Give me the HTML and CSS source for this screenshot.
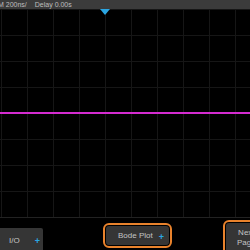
FILE: index.html
```html
<!DOCTYPE html>
<html lang="en">
<head>
    <meta charset="UTF-8">
    <title>Scope</title>
    <link rel="stylesheet" href="styles.css">
</head>
<body>
    <div class="scope">
        <!-- Timebase / delay status line -->
        <div class="status">
            <span class="timebase">M 200ns/</span>
            <span class="delay">Delay 0.00s</span>
        </div>

        <!-- Waveform grid -->
        <div class="grid">
            <svg class="trigger" width="10" height="6" viewBox="0 0 10 6">
                <polygon points="0,0 10,0 5,6" fill="#2ba6e2"/>
            </svg>
            <div class="trace"></div>
        </div>

        <!-- Soft key menu -->
        <div class="menu">
            <div class="key key-io">
                <span class="label">I/O</span>
                <span class="plus">+</span>
            </div>
            <div class="ring ring-bode">
                <div class="key key-bode">
                    <span class="label">Bode Plot</span>
                    <span class="plus">+</span>
                </div>
            </div>
            <div class="ring ring-next">
                <div class="key key-next">
                    <span class="label">Next<br>Page</span>
                </div>
            </div>
        </div>
    </div>
</body>
</html>
```
FILE: styles.css
```css
body {
    margin: 0;
    background-color: #000;
    font-family: "Liberation Sans", Arial, sans-serif;
}
.scope {
    width: 250px;
    height: 250px;
    overflow: hidden;
    display: flex;
    flex-direction: column;
    background-color: #000;
}
.status {
    flex-shrink: 0;
    height: 9px;
    background-color: #3b3b3b;
    color: #bdbdbd;
    font-size: 7px;
    line-height: 9px;
    display: flex;
    gap: 8px;
    white-space: nowrap;
}
.timebase {
    margin-left: -2px;
}
.grid {
    flex-shrink: 0;
    position: relative;
    height: 208px;
    border-bottom: 1px solid #222;
    background-image:
        repeating-linear-gradient(to right, #161616 0, #161616 1px, transparent 1px, transparent 26px),
        repeating-linear-gradient(to bottom, #161616 0, #161616 1px, transparent 1px, transparent 26px);
    background-position: 1px 0, 0 26px;
}
.trigger {
    position: absolute;
    left: 100px;
    top: 0;
    display: block;
}
.trace {
    position: absolute;
    left: 0;
    right: 0;
    top: 103px;
    height: 2px;
    background-color: #d42bd0;
}
.menu {
    flex: 1;
    min-height: 0;
    display: flex;
    align-items: flex-start;
}
.menu > * {
    flex-shrink: 0;
}
.key {
    background-color: #353535;
    color: #c4c4c4;
    font-size: 8px;
    display: flex;
    align-items: center;
    position: relative;
    box-sizing: border-box;
}
.plus {
    color: #2ba6e2;
    font-weight: bold;
    font-size: 9px;
    position: absolute;
}
.key-io {
    margin-top: 10px;
    width: 43px;
    height: 24px;
    border-radius: 0 2px 0 0;
}
.key-io .label {
    margin-left: 9px;
}
.key-io .plus {
    right: 3px;
    top: 8px;
}
.ring {
    border: 2px solid #e8822c;
    border-radius: 6px;
    padding: 1px;
    box-sizing: border-box;
}
.ring-bode {
    margin-top: 5px;
    margin-left: 60px;
    width: 69px;
    height: 25px;
}
.key-bode {
    height: 19px;
    border-radius: 3px;
}
.key-bode .label {
    margin-left: 12px;
}
.key-bode .plus {
    right: 5px;
    top: 6px;
}
.ring-next {
    margin-top: 2px;
    margin-left: 51px;
    width: 44px;
    height: 36px;
}
.key-next {
    height: 30px;
    border-radius: 3px;
    line-height: 10px;
    text-align: center;
}
.key-next .label {
    margin-left: 11px;
}
```
